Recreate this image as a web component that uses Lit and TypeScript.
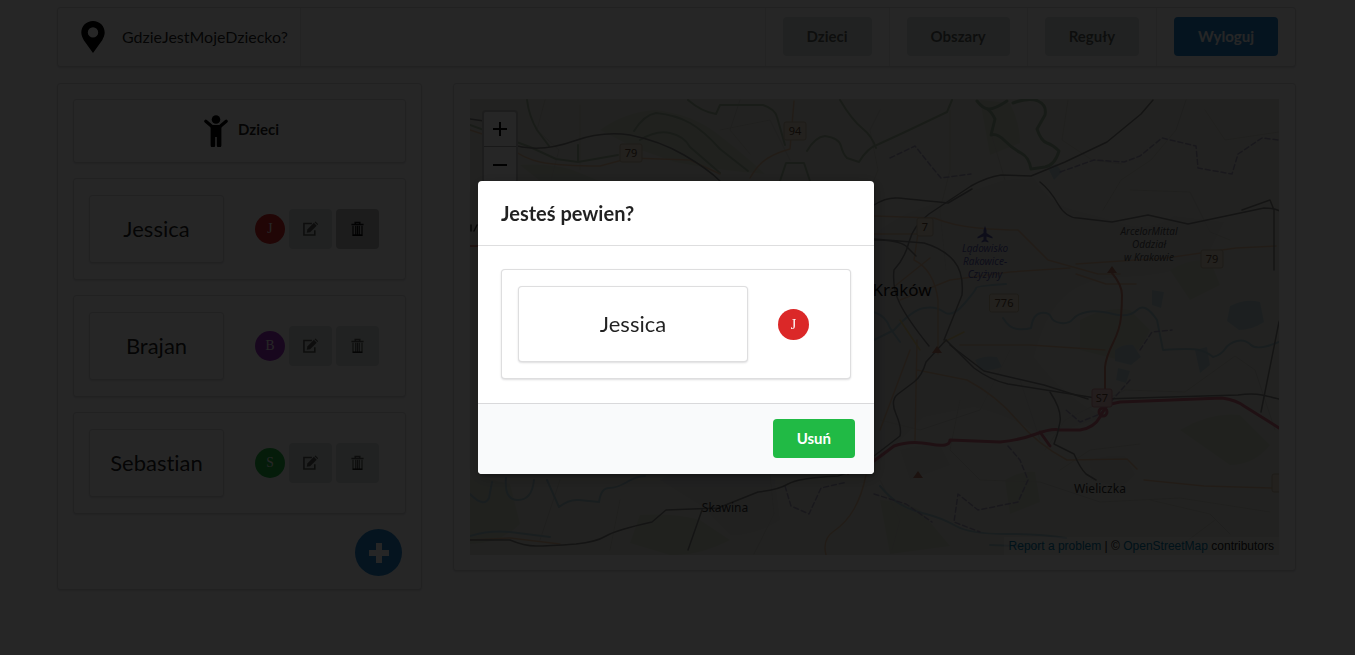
import { LitElement, html, svg, css } from "lit";
import { customElement, property, state } from "lit/decorators.js";

interface Child {
  name: string;
  color: string;
}

const CHILDREN: Child[] = [
  { name: "Jessica", color: "#db2828" },
  { name: "Brajan", color: "#a333c8" },
  { name: "Sebastian", color: "#21ba45" },
];

const base = css`
  * {
    box-sizing: border-box;
  }
  button {
    font-family: inherit;
    font-size: 15px;
    font-weight: 700;
    line-height: 15px;
    padding: 12px 24px;
    border: 0;
    border-radius: 4px;
    background: #dce4e0;
    color: rgba(0, 0, 0, 0.6);
    cursor: pointer;
  }
  .segment {
    background: #fff;
    border: 1px solid rgba(34, 36, 38, 0.15);
    border-radius: 4px;
    box-shadow: 0 1px 2px rgba(34, 36, 38, 0.15);
    padding: 16px;
  }
`;

@customElement("child-avatar")
export class ChildAvatar extends LitElement {
  static styles = css`
    :host {
      display: block;
      flex: none;
    }
    svg {
      display: block;
    }
    text {
      font: 14px "Liberation Serif", serif;
      fill: #fff;
      text-anchor: middle;
    }
  `;
  @property() letter = "";
  @property() color = "";
  @property({ type: Number }) size = 31;

  render() {
    return html`<svg width=${this.size} height=${this.size} viewBox="0 0 31 31">
      <circle cx="15.5" cy="15.5" r="15.5" fill=${this.color} />
      <text x="15.5" y="20">${this.letter}</text>
    </svg>`;
  }
}

@customElement("child-card")
export class ChildCard extends LitElement {
  static styles = [
    base,
    css`
      :host {
        display: block;
      }
      .card {
        display: flex;
        align-items: center;
        padding: 16px 15px;
      }
      .name {
        flex: none;
        width: 135px;
        padding: 16px 0;
        text-align: center;
        font-size: 22px;
        line-height: 34px;
      }
      .tools {
        display: flex;
        align-items: center;
        gap: 4px;
        margin-left: 31px;
      }
      .icon {
        padding: 12px 14px;
        height: 40px;
      }
      .icon svg {
        display: block;
      }
      .pressed {
        background: #babbbc;
        color: rgba(0, 0, 0, 0.9);
      }
    `,
  ];
  @property({ attribute: false }) child!: Child;
  @property({ type: Boolean }) removing = false;

  render() {
    return html`<div class="segment card">
      <div class="segment name">${this.child.name}</div>
      <div class="tools">
        <child-avatar size="30" letter=${this.child.name[0]} color=${this.child.color}></child-avatar>
        <button class="icon" aria-label="Edytuj">
          <svg width="15" height="16" viewBox="0 0 16 16" fill="none" stroke="currentColor">
            <path d="M9.500 2.200H1v12.200h11.600V9.400" stroke-width="1.700" />
            <path d="M4 12l.6-3.600 7-7 3 3-7 7z" fill="currentColor" stroke="none" />
            <path d="M12.300 .8l1-.9 3 3-1 .9z" fill="currentColor" stroke="none" />
          </svg>
        </button>
        <button class="icon ${this.removing ? "pressed" : ""}" aria-label="Usuń">
          <svg width="15" height="16" viewBox="0 0 16 16" fill="none" stroke="currentColor">
            <path d="M1.500 3.200h13M5.600 3V1h4.800v2" stroke-width="1.700" />
            <path d="M3.200 4.500v10.300h9.600V4.500M6.100 4.500v10M8 4.500v10M9.900 4.500v10" stroke-width="1.300" />
            <path d="M3 14.600h10" stroke-width="1.800" />
          </svg>
        </button>
      </div>
    </div>`;
  }
}

@customElement("city-map")
export class CityMap extends LitElement {
  static styles = css`
    :host {
      display: block;
      position: relative;
      height: 456px;
      overflow: hidden;
      background: #e4e4da;
    }
    .tiles {
      display: block;
      width: 100%;
      height: 100%;
    }
    .zoom {
      position: absolute;
      left: 12px;
      top: 11px;
      display: flex;
      flex-direction: column;
      border: 2px solid rgba(0, 0, 0, 0.25);
      border-radius: 4px;
      background: #fff;
    }
    .zoom button {
      display: grid;
      place-items: center;
      width: 32px;
      height: 35px;
      padding: 0;
      border: 0;
      background: none;
      color: #000;
    }
    .zoom button:first-child {
      border-bottom: 1px solid #aaa;
    }
    .credit {
      position: absolute;
      right: 0;
      bottom: 0;
      padding: 0 5px;
      background: rgba(255, 255, 255, 0.4);
      color: #222;
      font: 12px/18px "Liberation Sans", sans-serif;
    }
    .credit a {
      color: #0078a8;
      text-decoration: none;
    }
    text {
      font-family: "Noto Sans", sans-serif;
      text-anchor: middle;
      fill: #333;
    }
    .town {
      font-size: 12px;
    }
    .city {
      font-size: 17px;
      fill: #111;
    }
    .place {
      font-size: 10px;
      font-style: italic;
      fill: #555;
    }
    .air {
      fill: #5a5aa8;
    }
    .shield {
      font-size: 11px;
      fill: #5c4630;
    }
    .line {
      fill: none;
      stroke-linejoin: round;
      stroke-linecap: round;
    }
  `;

  private shield(x: number, y: number, label: string, w = 22, red = false) {
    return svg`<rect x=${x - w / 2} y=${y - 9} width=${w} height="18" rx="2"
        fill=${red ? "#ecc4c4" : "#e6dcc8"} stroke=${red ? "#d08c94" : "#c8b99c"} />
      <text class="shield" x=${x} y=${y + 4}>${label}</text>`;
  }

  render() {
    return html`<svg class="tiles" viewBox="470 99 809 456" preserveAspectRatio="xMidYMid slice">
        <rect x="470" y="99" width="809" height="456" fill="#e4e4da" />
        <g fill="#dcdcd8">
          <path d="M874 235q20-18 50-28t80-27l30-2q16 26 40 32t50 14 50-8l50 6-20 40q-40 14-80 15t-60 20-30 60q30 40 70 60l-60 20q-30-20-70-30l-50 10-50 50z" />
          <path d="M1090 460q20-6 35-4l10 18q-8 12-20 12l-24-6zM900 450q20-6 40-5l10 20-40 15zM660 480q30-20 60-20l55 20 5 40q-25 16-50 15l-30-30z" />
        </g>
        <g fill="#d6dccb">
          <path d="M600 130q25-18 55-20 36 4 60 22t50 42q-50-4-90-12l-40-14zM980 100l30 3q10 20 10 40l-30 12z" />
          <path d="M520 165q26-2 50 4l30 12h-60zM1080 320q26-14 50-10l20 20q-12 28-30 30l-40-10zM1170 270q20-12 40-10l10 25-30 15zM1005 480q16-10 30-8l5 30-30 12z" />
          <path d="M470 480q20-2 40 4l10 40q-20 20-50 20zM640 515q34-2 60 5l30 20q-30 16-60 15l-40-12zM880 500q20 0 40 10l30 36-60 8zM1180 430q30-18 60-15l30 30q-16 20-40 20z" />
        </g>
        <g fill="#bcd2d8">
          <path d="M1152 290l12 2-3 16-9-3zM1230 306q16-8 30-4l4 20q-12 8-25 8l-12-9zM1115 350q8-6 18-5l8 12-10 8-16-4zM1118 368l12 3-4 12-10-3zM1195 350l12-3 3 18-10 8z" />
          <path d="M975 360q10-5 22-3l5 10q-12 4-22 3zM1048 168l8-4 6 8-8 8z" />
        </g>
        <g class="line" stroke="#d2d2ca" stroke-width="1">
          <path d="M880 110l-10 20 8 40-12 30M950 110v60l-10 40 6 60M990 130l15 50M1068 100l-6 40 30 20 30 4M1186 100l-10 30-25 30-30 20-18 30M1130 190l60 2 20 40 20 8M1205 110l20 30 54-8" />
          <path d="M480 340l40 20M560 480l-20 60M620 500l-10 50M770 474l4 40-20 40M880 480l20 40-8 30M960 400l-10 50 30 30 60 2 60 20 80-4 90 14M1045 450l20-30 60-30 60 2 50-36 20 14 20 60" />
          <path d="M880 420l40 10 60-20 30-60M1020 380l20 60M1060 470l30-20 50-6M1215 520l-40 30M1150 500l60 14 20 20" />
          <path d="M545 100l-8 30 22 20-8 30M580 105v65M740 100l-10 30 20 24M720 130l50-10 20 40" />
        </g>
        <g class="line" stroke="#a8bba2" stroke-width="2">
          <path d="M688 100q14 12 28 14l4-9h43q12 4 14 12l8 28M527 100q2 16 10 30l12 16M840 100q12 20 22 28t14 20" />
          <path d="M634 131q10-16 22-18 20 2 34 10t30 26l28 22M640 140q16-10 30-7t20 14l30 26" />
          <path d="M807 151q8-14 18-15 14 2 16 10t6 12l12 4q8-14 20-18l26-12 42-20 5-12" />
          <path d="M977 101q6 8 12 8t18-8M1013 103q16-6 25-2t7 14l-8 14q4 12 10 14t12 8q-4 14-14 16l-14 2q-2-12-10-16t-16-12-14-6l4-16q-4-8-8-10" stroke="#9cb599" stroke-width="3" />
          <path d="M578 145v16M470 125l60 22 26 12 22 3 40-7M780 181l6-18h18l6 18" />
        </g>
        <g class="line" stroke="#a9c6d0" stroke-width="2">
          <path d="M874 340l20-10q18-20 30-22t20 4 20-8 12-16 30-4M874 312q12 4 16 16l10 14M1003 318q6 10 14 11t14-1q2-14 10-15t10 4 10 6 12-4 14-7 26 2 24-4 20 10q4 20 6 30 28-2 36 0t14 7q8-2 12-8t12-8 14 4 28-3" />
          <path d="M470 494q14 14 19 4l3-16M506 478q-2 22 12 22 14 0 16-20M547 480l12 27q10-8 20-7t20 2q2-14 10-14t18-6 18-6M990 545l50 2M470 536q20-6 40-4l40 5" />
          <path d="M880 486q10 12 20 18t26 10 30 12 50 8 60 4" />
        </g>
        <g class="line" stroke="#a5a0bc" stroke-width="1.500" stroke-dasharray="5 3">
          <path d="M890 158l25-12 16 20 10 12 30-4M1060 172l34-12 30 2 16-6 22-18 34 8 2 22 34 6 6-20 24-16 17 2" />
          <path d="M1008 446l12 14 8 20-10 22-40 8-20-16-4 28 26 10M1130 380l-30 34-20 8-14-12M785 486l6 20 18 8 12-26 26-6M874 494l32 10 26 18M1140 350l12-18 20-2" />
        </g>
        <g class="line" stroke="#e0bd9c" stroke-width="1.500">
          <path d="M470 130l30 10q20 18 40 22t60 4l30-8 60 2 30 14M750 178q8-14 18-20t22-9l4-48M874 216l60 2q20 8 44 10t40 2l30 30 50 14h22" />
          <path d="M874 234h50M1076 264l90-6 70-10 40-2M920 220l-6 40q20 10 24 40v54M890 290l40-32M900 300l50-20 60-8 60-4M960 345h70l75 5M1076 274l30 10h30M917 340l-2 100M880 430l30-80M917 370l50 10q30 16 50 40t50 40l60-1 10 10M1144 480l60 6 70 2M826 555q-4-16 8-24t20-22 12-34M470 540l40-2 50 6" />
          <path d="M964 332l-20 10M900 320l20 30" stroke="#e4cc84" />
        </g>
        <g class="line" stroke="#d08474" stroke-width="2">
          <path d="M1112 273q10 12 10 22t-1 22-8 26-8 24v30M848 474l26-16M470 246h10" />
        </g>
        <g class="line" stroke="#cf6c80" stroke-width="3">
          <path d="M874 461l20-15q16-6 36-2t20-4l50 2q20-2 36-8t24-4h20q14-2 20-13t8-12 12-3l102-4q14 2 22 8l35 22M1040 432l10 14" />
          <circle cx="1103" cy="412" r="4" />
        </g>
        <g class="line" stroke="#868684" stroke-width="1.500">
          <path d="M1153 100l-12 14-34 28-42 20-34 14-30-1q-14 2-30 11l-42 28q-16 12-20 28t-15 28q-2 18 6 34t29 42" />
          <path d="M470 119l14 2q14 22 38 26t52-6 56-6q30 6 54 20t36 26M874 205q12-8 24-7t50 5l24-14M1040 182q10 8 18 22t20 14l34 4 36-7 40 9 76-16q16 0 22 8l5 66q-4 20-12 40l-18 90M1242 210l28-10 4 10v60" />
          <path d="M874 240q24 0 32 6l10 10M874 239l50 4q20 6 30 18t8 34l-18 45M946 340l28 28q16 12 34 16l94 15 136-4q14-2 24 0l17 4" />
          <path d="M946 340l-20 22q-4 14-12 20t-16 12-2 20 4 22l-26 20M950 345l34 26 60 14 44 14M1050 392q12 18 10 30t-6 22l20 10q6 14 12 20l10 6" />
          <path d="M470 540h40q14 6 26 6t40-2q20-2 30-8t46-14l14-12 52-2 40-16q20-2 30-8t50-8l20-7M702 510l-14 40" />
        </g>
        <g fill="#b87a64">
          <path d="M1107 273l5-7 5 7zM932 353l5-7 5 7zM913 478l5-7 5 7z" />
        </g>
        <path fill="#5a5aa8" d="M985 226l1.500 4v3l6 4v1.500l-6-2v3l2 2v1l-3.500-1-3.500 1v-1l2-2v-3l-6 2v-1.500l6-4v-3z" />
        ${this.shield(631, 153, "79")} ${this.shield(795, 131, "94")} ${this.shield(925, 227, "7", 16)}
        ${this.shield(1212, 259, "79")} ${this.shield(1004, 303, "776", 29)}
        ${this.shield(1102, 398, "S7", 20, true)}
        <rect x="1272" y="474" width="16" height="18" rx="2" fill="#e6dcc8" stroke="#c8b99c" />
        <text class="place air" x="985" y="252">Lądowisko</text>
        <text class="place air" x="985" y="265">Rakowice-</text>
        <text class="place air" x="985" y="278">Czyżyny</text>
        <text class="place" x="1149" y="235">ArcelorMittal</text>
        <text class="place" x="1149" y="248">Oddział</text>
        <text class="place" x="1149" y="261">w Krakowie</text>
        <text class="city" x="902" y="296">Kraków</text>
        <text class="town" x="725" y="512">Skawina</text>
        <text class="town" x="1100" y="493">Wieliczka</text>
        <path class="line" stroke="#333" stroke-width="1.500" d="M471 231v-6M474 231l3-6" />
      </svg>
      <div class="zoom">
        <button aria-label="Przybliż">
          <svg width="14" height="14" stroke="currentColor" stroke-width="2"><path d="M7 0v14M0 7h14" /></svg>
        </button>
        <button aria-label="Oddal">
          <svg width="14" height="14" stroke="currentColor" stroke-width="2"><path d="M0 7h14" /></svg>
        </button>
      </div>
      <div class="credit">
        <a href="#report">Report a problem</a> | © <a href="#osm">OpenStreetMap</a> contributors
      </div>`;
  }
}

@customElement("app-root")
export class AppRoot extends LitElement {
  static styles = [
    base,
    css`
      :host {
        display: block;
        min-height: 100vh;
        padding: 7px 59px 0 57px;
        background: #fff;
        color: rgba(0, 0, 0, 0.87);
        font-family: Lato, sans-serif;
        font-size: 15px;
        font-variant-ligatures: none;
      }
      .menu {
        display: flex;
        padding: 0;
        margin-bottom: 16px;
      }
      .item {
        display: flex;
        align-items: center;
        padding: 9px 17px 10px;
        border-right: 1px solid rgba(34, 36, 38, 0.1);
      }
      .brand {
        gap: 11px;
        padding-right: 12px;
        font-size: 16px;
      }
      .spacer {
        flex: 1;
        border-right: 1px solid rgba(34, 36, 38, 0.1);
      }
      .item:last-child {
        border-right: 0;
      }
      .primary {
        background: #2185d0;
        color: #fff;
      }
      .columns {
        display: grid;
        grid-template-columns: 365fr 843fr;
        gap: 31px;
        align-items: start;
      }
      .list {
        display: flex;
        flex-direction: column;
        gap: 15px;
        padding: 15px 15px 13px;
      }
      .title {
        display: flex;
        justify-content: center;
        align-items: flex-start;
        gap: 10px;
        padding: 15px 15px 15px 19px;
        margin: 0;
        font-size: 15px;
        font-weight: 700;
        line-height: 28px;
      }
      .add {
        align-self: flex-end;
        display: grid;
        place-items: center;
        width: 47px;
        height: 47px;
        margin-right: 4px;
        padding: 0;
        border-radius: 50%;
      }
      .map {
        padding: 15px 16px;
      }
      .dimmer {
        position: fixed;
        inset: 0;
        display: flex;
        align-items: center;
        justify-content: center;
        padding-right: 3px;
        background: rgba(0, 0, 0, 0.85);
      }
      .modal {
        width: 396px;
        max-width: 95%;
        border-radius: 4px;
        overflow: hidden;
        background: #fff;
        box-shadow: 1px 3px 3px rgba(0, 0, 0, 0.2), 1px 3px 15px 2px rgba(0, 0, 0, 0.2);
      }
      .heading {
        margin: 0;
        padding: 19px 23px;
        border-bottom: 1px solid rgba(34, 36, 38, 0.15);
        font-size: 20px;
        font-weight: 700;
        line-height: 26px;
      }
      .content {
        padding: 23px 23px 24px;
      }
      .who {
        display: flex;
        align-items: center;
        gap: 30px;
        padding-right: 41px;
      }
      .name {
        flex: 1;
        text-align: center;
        font-size: 22px;
        line-height: 42px;
      }
      .actions {
        display: flex;
        justify-content: flex-end;
        padding: 15px 19px 16px;
        border-top: 1px solid rgba(34, 36, 38, 0.15);
        background: #f9fafb;
      }
      .positive {
        background: #21ba45;
        color: #fff;
      }
    `,
  ];

  @state() private removing: Child | null = CHILDREN[0];

  render() {
    return html`<nav class="segment menu">
        <div class="item brand">
          <svg width="36" height="36" viewBox="0 0 36 36">
            <path fill="#000" fill-rule="evenodd" d="M18 2C11.400 2 6.300 7.100 6.300 13.600c0 3 1.200 5.200 2.500 7.600L18 34l9.200-12.800c1.300-2.400 2.500-4.600 2.500-7.600C29.700 7.100 24.600 2 18 2zm0 6.200a5.200 5.200 0 1 1 0 10.400 5.200 5.200 0 0 1 0-10.400z" />
          </svg>
          GdzieJestMojeDziecko?
        </div>
        <div class="spacer"></div>
        <div class="item"><button>Dzieci</button></div>
        <div class="item"><button>Obszary</button></div>
        <div class="item"><button>Reguły</button></div>
        <div class="item"><button class="primary">Wyloguj</button></div>
      </nav>
      <main class="columns">
        <section class="segment list">
          <h2 class="segment title">
            <svg width="24" height="32" viewBox="0 0 24 32">
              <circle cx="12" cy="4.500" r="4.300" />
              <path d="M1.800 6.200L8 11.500h8l6.200-5.300" fill="none" stroke="#000" stroke-width="3.200" stroke-linecap="round" stroke-linejoin="round" />
              <path d="M6.600 10.500h10.800v19.700a1.700 1.700 0 0 1-4.600 0V22h-1.600v8.200a1.700 1.700 0 0 1-4.600 0z" />
            </svg>
            Dzieci
          </h2>
          ${CHILDREN.map(
            (c) => html`<child-card .child=${c} ?removing=${c === this.removing}></child-card>`
          )}
          <button class="primary add" aria-label="Dodaj">
            <svg width="22" height="22" stroke="#fff" stroke-width="6" stroke-linecap="butt"><path d="M11 1v20M1 11h20" /></svg>
          </button>
        </section>
        <section class="segment map"><city-map></city-map></section>
      </main>
      ${this.removing
        ? html`<div class="dimmer">
            <div class="modal" role="dialog" aria-modal="true" aria-labelledby="heading">
              <h1 class="heading" id="heading">Jesteś pewien?</h1>
              <div class="content">
                <div class="segment who">
                  <div class="segment name">${this.removing.name}</div>
                  <child-avatar letter=${this.removing.name[0]} color=${this.removing.color}></child-avatar>
                </div>
              </div>
              <div class="actions">
                <button class="positive" @click=${() => (this.removing = null)}>Usuń</button>
              </div>
            </div>
          </div>`
        : null}`;
  }
}
